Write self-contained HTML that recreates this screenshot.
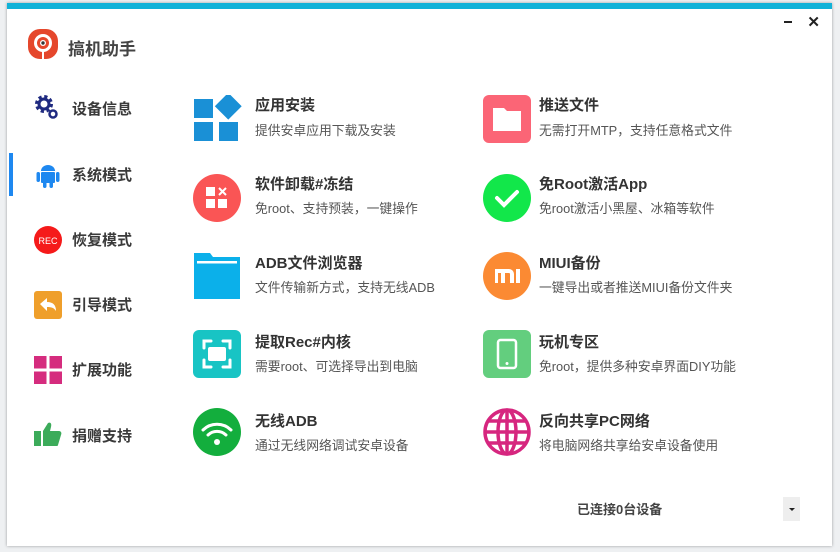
<!DOCTYPE html><html><head><meta charset="utf-8"><style>
body{margin:0;width:840px;height:552px;background:#eef0f2;font-family:"Liberation Sans","Noto Sans CJK SC",sans-serif;position:relative;overflow:hidden}
.win{position:absolute;left:7px;top:3px;width:825px;height:543px;background:#fff;box-shadow:0 0 3px rgba(0,0,0,.35)}
.bar{position:absolute;left:0;top:0;width:100%;height:6px;background:#10b2d8}
.a{position:absolute}
.nav{position:absolute;left:65px;font-size:15px;color:#3a3a3a;font-weight:bold}
.t{position:absolute;font-size:15px;font-weight:bold;color:#333}
.s{position:absolute;font-size:12.8px;color:#555}
</style></head><body><div class="win"><div class="bar"></div>
<div class="a" style="right:40px;top:18px;width:8px;height:2px;background:#222"></div>
<div class="a" style="right:12px;top:10px;font-size:15px;font-weight:bold;color:#222">✕</div>
<svg class="a" style="left:20px;top:25px" width="32" height="34" viewBox="0 0 32 34"><rect x="1" y="1" width="30" height="30" rx="12" fill="#e5472c"/><circle cx="16" cy="15" r="9" fill="#fff"/><circle cx="16" cy="15" r="6" fill="#e5472c"/><circle cx="16" cy="15" r="3" fill="#fff"/><circle cx="16" cy="15" r="1.7" fill="#333"/><rect x="15" y="22" width="2" height="9" fill="#fff"/></svg>
<div class="a" style="left:61px;top:32px;font-size:17px;color:#444;font-weight:bold">搞机助手</div>

<svg class="a" style="left:27px;top:91px" width="26" height="26" viewBox="0 0 26 26"><circle cx="10" cy="10" r="7" fill="none" stroke="#1f2a80" stroke-width="4" stroke-dasharray="3 2.5"/><circle cx="10" cy="10" r="5" fill="none" stroke="#1f2a80" stroke-width="3"/><circle cx="19" cy="20" r="3.5" fill="none" stroke="#1f2a80" stroke-width="2.5"/></svg>
<div class="nav" style="top:95px">设备信息</div>
<div class="a" style="left:2px;top:150px;width:4px;height:43px;background:#1e88f0"></div>
<svg class="a" style="left:28px;top:158px" width="26" height="28" viewBox="0 0 26 28"><path d="M6 10a7 6 0 0 1 14 0z" fill="#1e88f0"/><rect x="6" y="11" width="14" height="11" rx="1" fill="#1e88f0"/><rect x="1.5" y="11" width="3.5" height="10" rx="1.7" fill="#1e88f0"/><rect x="21" y="11" width="3.5" height="10" rx="1.7" fill="#1e88f0"/><rect x="8" y="20" width="3.5" height="7" rx="1.7" fill="#1e88f0"/><rect x="14.5" y="20" width="3.5" height="7" rx="1.7" fill="#1e88f0"/></svg>
<div class="nav" style="top:161px">系统模式</div>
<svg class="a" style="left:27px;top:223px" width="28" height="28"><circle cx="14" cy="14" r="14" fill="#f51a1a"/><text x="14" y="18" font-size="9" fill="#fff" text-anchor="middle" font-family="Liberation Sans">REC</text></svg>
<div class="nav" style="top:226px">恢复模式</div>
<svg class="a" style="left:27px;top:288px" width="28" height="28"><rect width="28" height="28" rx="3" fill="#ef9f2b"/><path d="M6 13l7-6v4c6 0 9 3 9 9-2-3-4-4-9-4v4z" fill="#fff"/></svg>
<div class="nav" style="top:291px">引导模式</div>
<svg class="a" style="left:27px;top:353px" width="28" height="28"><rect width="12.5" height="12.5" fill="#d52c7e"/><rect x="15.5" width="12.5" height="12.5" fill="#d52c7e"/><rect y="15.5" width="12.5" height="12.5" fill="#d52c7e"/><rect x="15.5" y="15.5" width="12.5" height="12.5" fill="#d52c7e"/></svg>
<div class="nav" style="top:356px">扩展功能</div>
<svg class="a" style="left:27px;top:417px" width="28" height="28"><rect x="0" y="11" width="7" height="15" fill="#3cab5a"/><path d="M9 11l5-8c2-1 4 0 3 4l-1 4h9c2 0 3 2 2 4l-3 10c0 1-1 1-2 1H9z" fill="#3cab5a"/></svg>
<div class="nav" style="top:422px">捐赠支持</div>

<svg class="a" style="left:186px;top:92px" width="50" height="50"><rect x="1" y="4" width="19" height="19" fill="#1a90d6"/><rect x="24" y="1" width="19" height="19" fill="#1a90d6" transform="rotate(45 33.5 13)"/><rect x="1" y="27" width="19" height="19" fill="#1a90d6"/><rect x="26" y="27" width="19" height="19" fill="#1a90d6"/></svg>
<div class="t" style="left:248px;top:91px">应用安装</div><div class="s" style="left:248px;top:117px">提供安卓应用下载及安装</div>

<svg class="a" style="left:186px;top:171px" width="48" height="48"><circle cx="24" cy="24" r="24" fill="#fa5555"/><rect x="13" y="13" width="9" height="9" fill="#fff"/><rect x="13" y="25" width="9" height="9" fill="#fff"/><rect x="25" y="25" width="9" height="9" fill="#fff"/><path d="M26 14l7 7M33 14l-7 7" stroke="#fff" stroke-width="2"/></svg>
<div class="t" style="left:248px;top:170px">软件卸载#冻结</div><div class="s" style="left:248px;top:195px">免root、支持预装，一键操作</div>

<svg class="a" style="left:186px;top:248px" width="48" height="48"><path d="M1 2h16l3 4h27v42H1z" fill="#0bb0ea"/><rect x="4" y="10" width="40" height="2.5" fill="#fff"/></svg>
<div class="t" style="left:248px;top:249px">ADB文件浏览器</div><div class="s" style="left:248px;top:274px">文件传输新方式，支持无线ADB</div>

<svg class="a" style="left:186px;top:327px" width="48" height="48"><rect width="48" height="48" rx="6" fill="#18c4c4"/><path d="M11 18v-7h7M30 11h7v7M37 30v7h-7M18 37h-7v-7" stroke="#fff" stroke-width="3" fill="none" stroke-linecap="round"/><rect x="15" y="17" width="18" height="14" rx="2" fill="#fff"/></svg>
<div class="t" style="left:248px;top:328px">提取Rec#内核</div><div class="s" style="left:248px;top:353px">需要root、可选择导出到电脑</div>

<svg class="a" style="left:186px;top:405px" width="48" height="48"><circle cx="24" cy="24" r="24" fill="#13ae3d"/><path d="M10 22a20 20 0 0 1 28 0M15 27a13 13 0 0 1 18 0" stroke="#fff" stroke-width="3" fill="none" stroke-linecap="round"/><circle cx="24" cy="34" r="3" fill="#fff"/></svg>
<div class="t" style="left:248px;top:407px">无线ADB</div><div class="s" style="left:248px;top:432px">通过无线网络调试安卓设备</div>

<svg class="a" style="left:476px;top:92px" width="48" height="48"><rect width="48" height="48" rx="6" fill="#fb6576"/><path d="M10 13h11l3 3h14v20H10z" fill="#fff"/></svg>
<div class="t" style="left:532px;top:91px">推送文件</div><div class="s" style="left:532px;top:117px">无需打开MTP，支持任意格式文件</div>

<svg class="a" style="left:476px;top:171px" width="48" height="48"><circle cx="24" cy="24" r="24" fill="#12e74a"/><path d="M14 24l7 7 13-13" stroke="#fff" stroke-width="4" fill="none" stroke-linecap="round"/></svg>
<div class="t" style="left:532px;top:170px">免Root激活App</div><div class="s" style="left:532px;top:195px">免root激活小黑屋、冰箱等软件</div>

<svg class="a" style="left:476px;top:249px" width="48" height="48"><circle cx="24" cy="24" r="24" fill="#fb8a33"/><path d="M12 17h14a5 5 0 0 1 5 5v9h-4v-9a1 1 0 0 0-1-1h-4v10h-4V21h-3v10h-3z M33 17h4v14h-4z" fill="#fff"/></svg>
<div class="t" style="left:532px;top:249px">MIUI备份</div><div class="s" style="left:532px;top:274px">一键导出或者推送MIUI备份文件夹</div>

<svg class="a" style="left:476px;top:327px" width="48" height="48"><rect width="48" height="48" rx="6" fill="#63ce7e"/><rect x="15" y="10" width="18" height="28" rx="2.5" fill="none" stroke="#fff" stroke-width="2.5"/><circle cx="24" cy="33.5" r="1.5" fill="#fff"/></svg>
<div class="t" style="left:532px;top:328px">玩机专区</div><div class="s" style="left:532px;top:353px">免root，提供多种安卓界面DIY功能</div>

<svg class="a" style="left:476px;top:405px" width="48" height="48"><g fill="none" stroke="#d6267f" stroke-width="3.5"><circle cx="24" cy="24" r="22"/><ellipse cx="24" cy="24" rx="9" ry="22"/><path d="M24 2v44M2 24h44M6 13h36M6 35h36"/></g></svg>
<div class="t" style="left:532px;top:407px">反向共享PC网络</div><div class="s" style="left:532px;top:432px">将电脑网络共享给安卓设备使用</div>

<div class="a" style="left:570px;top:496px;font-size:13px;color:#444;font-weight:bold">已连接0台设备</div>
<div class="a" style="left:776px;top:494px;width:17px;height:24px;background:#eee"></div>
<div class="a" style="left:782px;top:505px;width:0;height:0;border-left:3px solid transparent;border-right:3px solid transparent;border-top:3px solid #222"></div>
</div></body></html>
